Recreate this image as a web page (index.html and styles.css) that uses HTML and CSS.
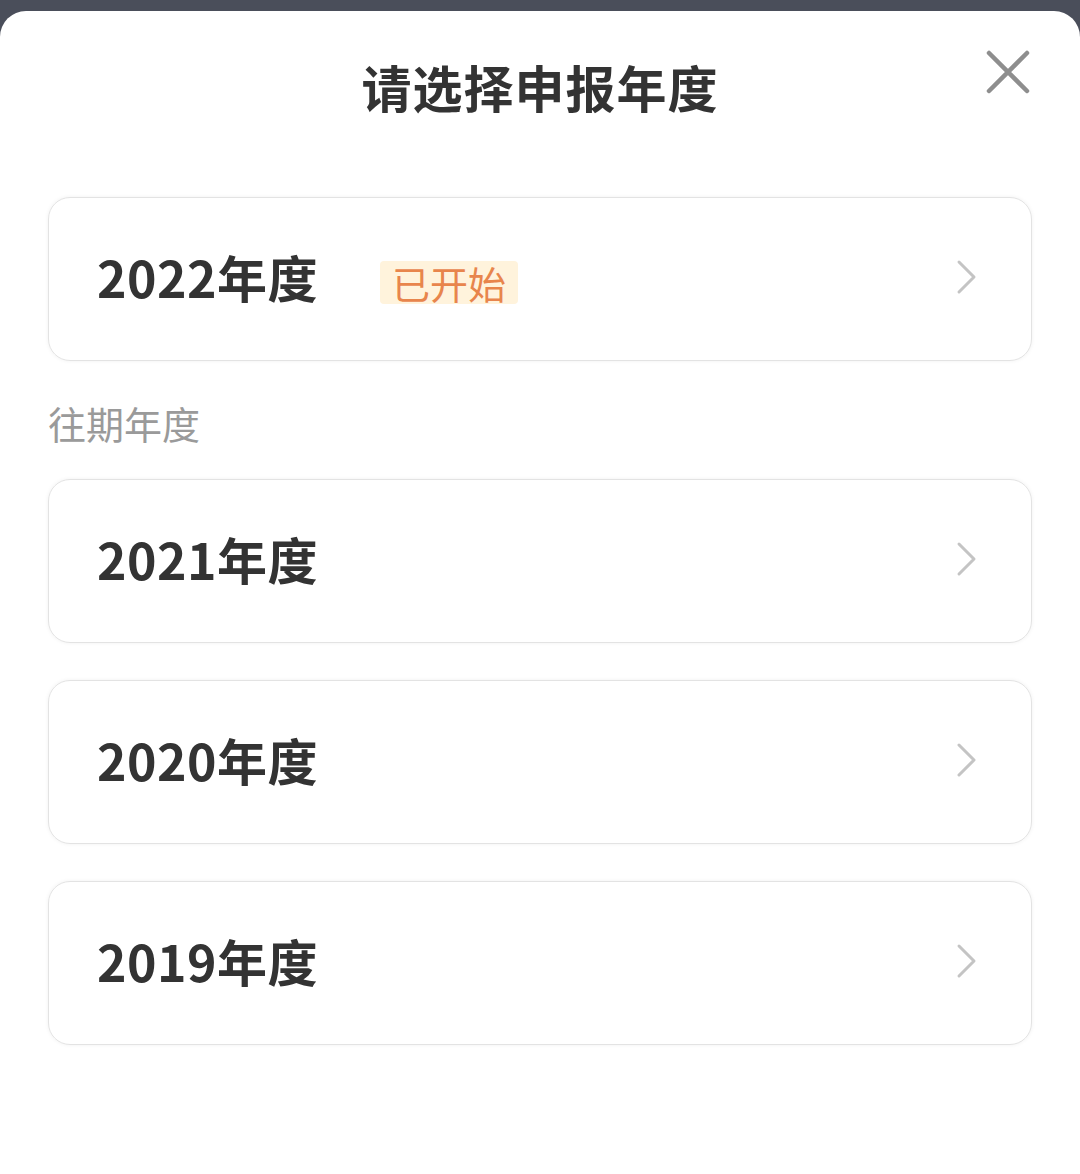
FILE: index.html
```html
<!DOCTYPE html>
<html lang="zh-CN">
<head>
    <meta charset="UTF-8">
    <meta name="viewport" content="width=device-width, initial-scale=1.0">
    <title>请选择申报年度</title>
    <link rel="stylesheet" href="styles.css">
</head>
<body>

    <div class="sheet">
        <div class="header">
            <h1 class="title">请选择申报年度</h1>
            <button class="close" aria-label="关闭">
                <svg width="44" height="44" viewBox="0 0 44 44">
                    <path d="M3 3 L41 41 M41 3 L3 41" stroke="#8e8e8e" stroke-width="4.5" stroke-linecap="round" fill="none"/>
                </svg>
            </button>
        </div>

        <div class="list">
            <div class="year-card">
                <span class="year">2022年度</span>
                <span class="badge">已开始</span>
                <svg class="arrow" width="22" height="36" viewBox="0 0 22 36">
                    <path d="M3 3 L18 18 L3 33" stroke="#c4c4c4" stroke-width="3" stroke-linecap="round" stroke-linejoin="round" fill="none"/>
                </svg>
            </div>

            <div class="section-label">往期年度</div>

            <div class="year-card">
                <span class="year">2021年度</span>
                <svg class="arrow" width="22" height="36" viewBox="0 0 22 36">
                    <path d="M3 3 L18 18 L3 33" stroke="#c4c4c4" stroke-width="3" stroke-linecap="round" stroke-linejoin="round" fill="none"/>
                </svg>
            </div>
            <div class="year-card">
                <span class="year">2020年度</span>
                <svg class="arrow" width="22" height="36" viewBox="0 0 22 36">
                    <path d="M3 3 L18 18 L3 33" stroke="#c4c4c4" stroke-width="3" stroke-linecap="round" stroke-linejoin="round" fill="none"/>
                </svg>
            </div>
            <div class="year-card">
                <span class="year">2019年度</span>
                <svg class="arrow" width="22" height="36" viewBox="0 0 22 36">
                    <path d="M3 3 L18 18 L3 33" stroke="#c4c4c4" stroke-width="3" stroke-linecap="round" stroke-linejoin="round" fill="none"/>
                </svg>
            </div>
        </div>
    </div>

</body>
</html>
```

FILE: styles.css
```css
body {
    margin: 0;
    background-color: #4a4e5a;
    font-family: "Noto Sans CJK SC", "Noto Sans", sans-serif;
    color: #333;
}
.sheet {
    margin-top: 11px;
    min-height: 1163px;
    background-color: #fff;
    border-radius: 26px 26px 0 0;
}
.header {
    position: relative;
    padding-top: 45px;
    text-align: center;
}
.title {
    margin: 0;
    font-size: 50px;
    line-height: 60px;
    letter-spacing: 1px;
    font-weight: bold;
    color: #333;
}
.close {
    position: absolute;
    top: 39px;
    right: 50px;
    padding: 0;
    border: none;
    background: none;
    line-height: 0;
}
.list {
    display: flex;
    flex-direction: column;
    gap: 37px;
    margin: 81px 48px 0;
}
.year-card {
    box-sizing: border-box;
    display: flex;
    align-items: center;
    height: 164px;
    padding: 0 53px 0 48px;
    border: 1.5px solid #e3e3e3;
    border-radius: 22px;
    box-shadow: 0 0 4px rgba(0, 0, 0, 0.06);
}
.year {
    margin-bottom: 6px;
    font-size: 50px;
    font-weight: bold;
    letter-spacing: 0.5px;
    color: #333;
    line-height: 60px;
}
.badge {
    margin: 6px 0 0 62px;
    padding: 0 12px;
    height: 43px;
    line-height: 43px;
    font-size: 38px;
    color: #e8854c;
    background-color: #fff3dc;
    border-radius: 4px;
}
.arrow {
    margin: 0 0 4px auto;
}
.section-label {
    margin: 6px 0 0;
    font-size: 38px;
    line-height: 38px;
    color: #9a9a9a;
}
```
